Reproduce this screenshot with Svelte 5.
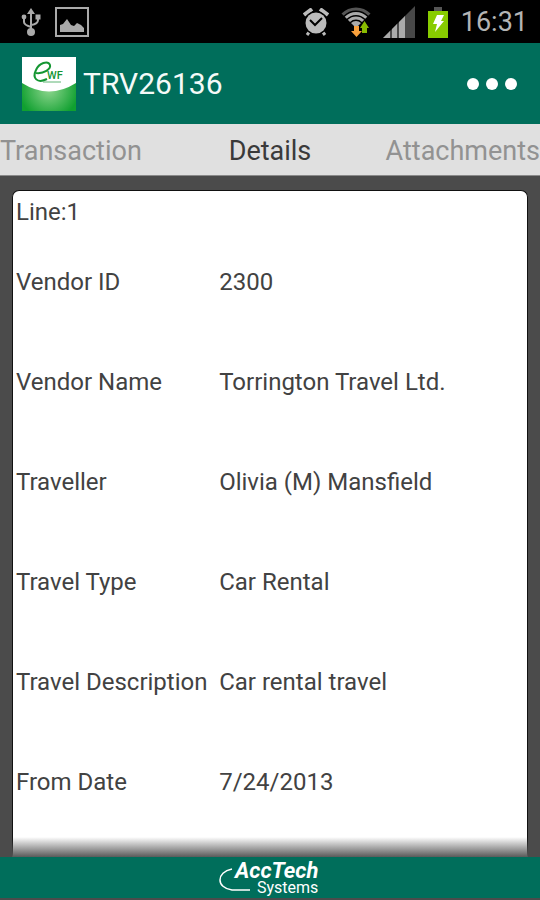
<script lang="ts">
  let activeTab = $state('Details');

  const tabs = ['Transaction', 'Details', 'Attachments'];

  const fields = [
    { label: 'Vendor ID', value: '2300' },
    { label: 'Vendor Name', value: 'Torrington Travel Ltd.' },
    { label: 'Traveller', value: 'Olivia (M) Mansfield' },
    { label: 'Travel Type', value: 'Car Rental' },
    { label: 'Travel Description', value: 'Car rental travel' },
    { label: 'From Date', value: '7/24/2013' }
  ];
</script>

<div class="screen">
  <div class="status-bar">
    <div class="status-icons left">
      <!-- usb -->
      <svg width="20" height="30" viewBox="0 0 20 30" fill="none" stroke="#aaa" stroke-width="2">
        <path d="M10 4v20M3 11v4q0 3 7 5M17 10v3q0 4-7 5" />
        <path d="M10 1l4 6H6z" fill="#aaa" stroke="none" />
        <circle cx="10" cy="25" r="4" fill="#aaa" stroke="none" />
        <circle cx="3" cy="10" r="2.4" fill="#aaa" stroke="none" />
        <path d="M14.500 7.500h5v5h-5z" fill="#aaa" stroke="none" />
      </svg>
      <!-- picture -->
      <svg width="34" height="30" viewBox="0 0 34 30">
        <path d="M1 1h32v28H1z" fill="none" stroke="#aaa" stroke-width="2" />
        <path d="M5 25v-7l3-1 4-5 4 6 3 1 3-3 4 2 3 3v4z" fill="#aaa" />
      </svg>
    </div>
    <div class="status-icons right">
      <!-- alarm -->
      <svg width="26" height="28" viewBox="0 0 26 28">
        <path d="M7 23l-3 4M19 23l3 4" stroke="#bbb" stroke-width="3" />
        <path d="M1 7l8-6M25 7l-8-6" stroke="#bbb" stroke-width="4" />
        <circle cx="13" cy="15" r="12" fill="#000" />
        <circle cx="13" cy="15" r="10.500" fill="#bbb" />
        <path d="M7 12l5 5 7-7" fill="none" stroke="#000" stroke-width="2" />
      </svg>
      <!-- wifi with traffic arrows -->
      <svg width="30" height="32" viewBox="0 0 30 32">
        <defs>
          <clipPath id="fan">
            <path d="M15 22L-3 4V-4h36v8z" />
          </clipPath>
        </defs>
        <g fill="none" stroke-width="3" clip-path="url(#fan)">
          <circle cx="15" cy="22" r="19" stroke="#555" />
          <circle cx="15" cy="22" r="14.500" stroke="#aaa" />
          <circle cx="15" cy="22" r="10" stroke="#aaa" />
          <circle cx="15" cy="22" r="3.500" stroke="#aaa" stroke-width="7" />
        </g>
        <path d="M13 20h5v5h3l-5.500 6-5.500-6h3z" fill="#f9a03c" />
        <path d="M21 27v-5h-2l4.500-7 4.500 7h-2v5z" fill="#8b0" />
      </svg>
      <!-- signal -->
      <svg width="32" height="32" viewBox="0 0 32 32">
        <path d="M0 32L32 0v32z" fill="#484848" />
        <path d="M0 32l7-7v7zM9 32v-9l5-5v14zM16 32V16l6-6v22z" fill="#aaa" />
      </svg>
      <!-- battery -->
      <svg width="22" height="32" viewBox="0 0 22 32">
        <path d="M7 1h8v4H7z" fill="#555" />
        <path d="M1 5h20v27H1z" fill="#8c0" />
        <path d="M10 9h7l-3 6h3L8 26l2-8H6z" fill="#fff" />
      </svg>
      <span class="clock">16:31</span>
    </div>
  </div>

  <header class="title-bar">
    <svg class="app-logo" width="54" height="54" viewBox="0 0 54 54">
      <defs>
        <radialGradient id="glow" cx="0.500" cy="0.600" r="0.550">
          <stop offset="0" stop-color="#8ed68e" />
          <stop offset="1" stop-color="#10a030" />
        </radialGradient>
      </defs>
      <path d="M0 0h54v54H0z" fill="url(#glow)" />
      <path d="M0 0h54v26q-27 17-54 0z" fill="#fff" />
      <path
        d="M14 16C22 17 29 12 28 8C26 3 17 6 14 13C10 21 15 27 25 22"
        fill="none"
        stroke="#149632"
        stroke-width="2"
      />
      <path d="M21 25h18" stroke="#5fb574" />
      <text x="25" y="22" class="logo-text">WF</text>
    </svg>
    <h1>TRV26136</h1>
    <button class="more" aria-label="More options">
      <svg width="52" height="12" viewBox="0 0 52 12" fill="#fff">
        <circle cx="7" cy="6" r="6" />
        <circle cx="26" cy="6" r="6" />
        <circle cx="45" cy="6" r="6" />
      </svg>
    </button>
  </header>

  <nav class="tabs">
    {#each tabs as tab}
      <button class:active={tab === activeTab} onclick={() => (activeTab = tab)}>{tab}</button>
    {/each}
  </nav>

  <main>
    <section class="card">
      <h2>Line:1</h2>
      <dl>
        {#each fields as field}
          <dt>{field.label}</dt>
          <dd>{field.value}</dd>
        {/each}
      </dl>
    </section>
    <div class="fade"></div>
  </main>

  <footer>
    <svg width="102" height="41" viewBox="0 0 102 41" role="img" aria-label="AccTech Systems">
      <path d="M13 12C-3 15-3 31 13 33H31" fill="none" stroke="#fff" stroke-width="1.500" />
      <text x="16" y="21" class="brand">AccTech</text>
      <text x="38" y="36" class="brand-sub">Systems</text>
    </svg>
  </footer>
</div>

<style>
  :global(body) {
    margin: 0;
    background: #4b4b4b;
  }

  .screen {
    display: flex;
    flex-direction: column;
    min-height: 100vh;
    font-family: Roboto, 'Liberation Sans', sans-serif;
    color: #424242;
  }

  .status-bar {
    display: flex;
    justify-content: space-between;
    align-items: center;
    height: 43px;
    padding: 0 12px 0 21px;
    background: #000;
  }

  .status-icons {
    display: flex;
    align-items: center;
  }

  .left {
    gap: 14px;
  }

  .right {
    gap: 12px;
  }

  .clock {
    font-size: 27px;
    line-height: 32px;
    color: #b4b4b4;
  }

  .title-bar {
    display: flex;
    align-items: center;
    gap: 7px;
    height: 81px;
    padding: 0 22px;
    background: #006e5b;
  }

  .logo-text {
    font-size: 11px;
    font-weight: 500;
    fill: #149632;
  }

  h1 {
    flex: 1;
    margin: 0;
    font-size: 30px;
    font-weight: 400;
    line-height: 36px;
    color: #f4faf8;
  }

  button {
    padding: 0;
    border: 0;
    background: none;
    font: inherit;
    cursor: pointer;
  }

  .more {
    display: flex;
  }

  .tabs {
    display: grid;
    grid-template-columns: 1fr auto 1fr;
    height: 48px;
    padding-top: 3px;
    background: #e0e0e0;
    border-bottom: 1px solid #8a8a8a;
  }

  .tabs button {
    font-size: 27px;
    line-height: 32px;
    color: #929292;
  }

  .tabs button:first-child {
    text-align: left;
  }

  .tabs button:last-child {
    text-align: right;
  }

  .tabs .active {
    color: #3a3a3a;
  }

  main {
    position: relative;
    display: flex;
    flex: 1;
    padding: 14px 12px 0;
  }

  .card {
    flex: 1;
    padding: 7px 3px 0;
    border: 1px solid #111;
    border-bottom: 0;
    border-radius: 7px 7px 0 0;
    background: #fff;
    font-size: 24px;
    line-height: 28px;
  }

  h2 {
    margin: 0 0 42px;
    font-size: 24px;
    font-weight: 400;
  }

  dl {
    display: grid;
    grid-template-columns: 2fr 3fr;
    row-gap: 72px;
    margin: 0;
  }

  dd {
    margin: 0;
  }

  .fade {
    position: absolute;
    right: 12px;
    bottom: 0;
    left: 12px;
    height: 20px;
    background: linear-gradient(rgba(75, 75, 75, 0), #5a5a5a);
  }

  footer {
    display: flex;
    justify-content: center;
    height: 41px;
    background: #006e5b;
    border-bottom: 2px solid #4b4b4b;
  }

  footer svg {
    display: block;
  }

  .brand {
    font-size: 22px;
    font-style: italic;
    font-weight: 700;
    fill: #fff;
  }

  .brand-sub {
    font-size: 16px;
    fill: #fff;
  }
</style>
